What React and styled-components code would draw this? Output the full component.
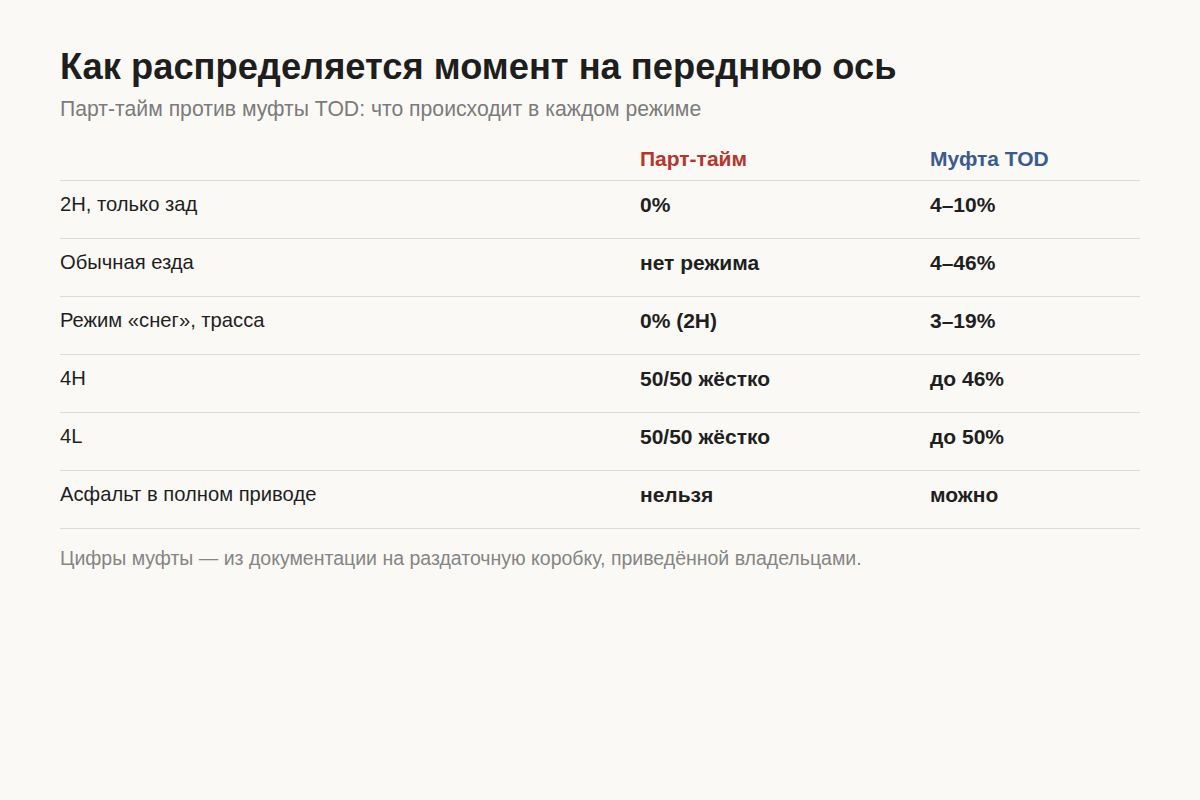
import React from "react";
import styled, { createGlobalStyle } from "styled-components";

const Global = createGlobalStyle`
  html, body { margin: 0; padding: 0; background: #faf9f6; }
  body { font-family: "Liberation Sans", Arial, sans-serif; color: #1f1f1f; }
`;

const Page = styled.main`
  width: 1200px;
  height: 800px;
  box-sizing: border-box;
  padding: 44px 60px 0;
  background: #faf9f6;
`;

const Title = styled.h1`
  margin: 0;
  font-size: 36.3px;
  font-weight: 700;
  line-height: 46px;
  color: #1e1e1e;
`;

const Subtitle = styled.p`
  margin: 6px 0 0;
  font-size: 21.2px;
  line-height: 26px;
  color: #7b7b7b;
`;

const Table = styled.div`
  margin-top: 19px;
  display: grid;
  grid-template-columns: 580px 290px 1fr;
`;

const Cell = styled.div`
  padding: 12px 0 22px;
  font-size: ${(p) => (p.$bold ? "21px" : "20.2px")};
  line-height: 23px;
  border-bottom: 1px solid #dddbd6;
  font-weight: ${(p) => (p.$bold ? 700 : 400)};
  color: ${(p) => p.$color || "#1f1f1f"};
`;

const HeadCell = styled(Cell)`
  padding: 6px 0 10px;
`;

const Note = styled.p`
  margin: 18px 0 0;
  font-size: 19.5px;
  line-height: 22px;
  color: #858585;
`;

const rows = [
  ["2Н, только зад", "0%", "4–10%"],
  ["Обычная езда", "нет режима", "4–46%"],
  ["Режим «снег», трасса", "0% (2Н)", "3–19%"],
  ["4Н", "50/50 жёстко", "до 46%"],
  ["4L", "50/50 жёстко", "до 50%"],
  ["Асфальт в полном приводе", "нельзя", "можно"],
];

export default function App() {
  return (
    <Page>
      <Global />
      <Title>Как распределяется момент на переднюю ось</Title>
      <Subtitle>Парт-тайм против муфты TOD: что происходит в каждом режиме</Subtitle>
      <Table>
        <HeadCell />
        <HeadCell $bold $color="#b5362c">Парт-тайм</HeadCell>
        <HeadCell $bold $color="#3b5b8d">Муфта TOD</HeadCell>
        {rows.map((r) => (
          <React.Fragment key={r[0]}>
            <Cell>{r[0]}</Cell>
            <Cell $bold>{r[1]}</Cell>
            <Cell $bold>{r[2]}</Cell>
          </React.Fragment>
        ))}
      </Table>
      <Note>Цифры муфты — из документации на раздаточную коробку, приведённой владельцами.</Note>
    </Page>
  );
}
